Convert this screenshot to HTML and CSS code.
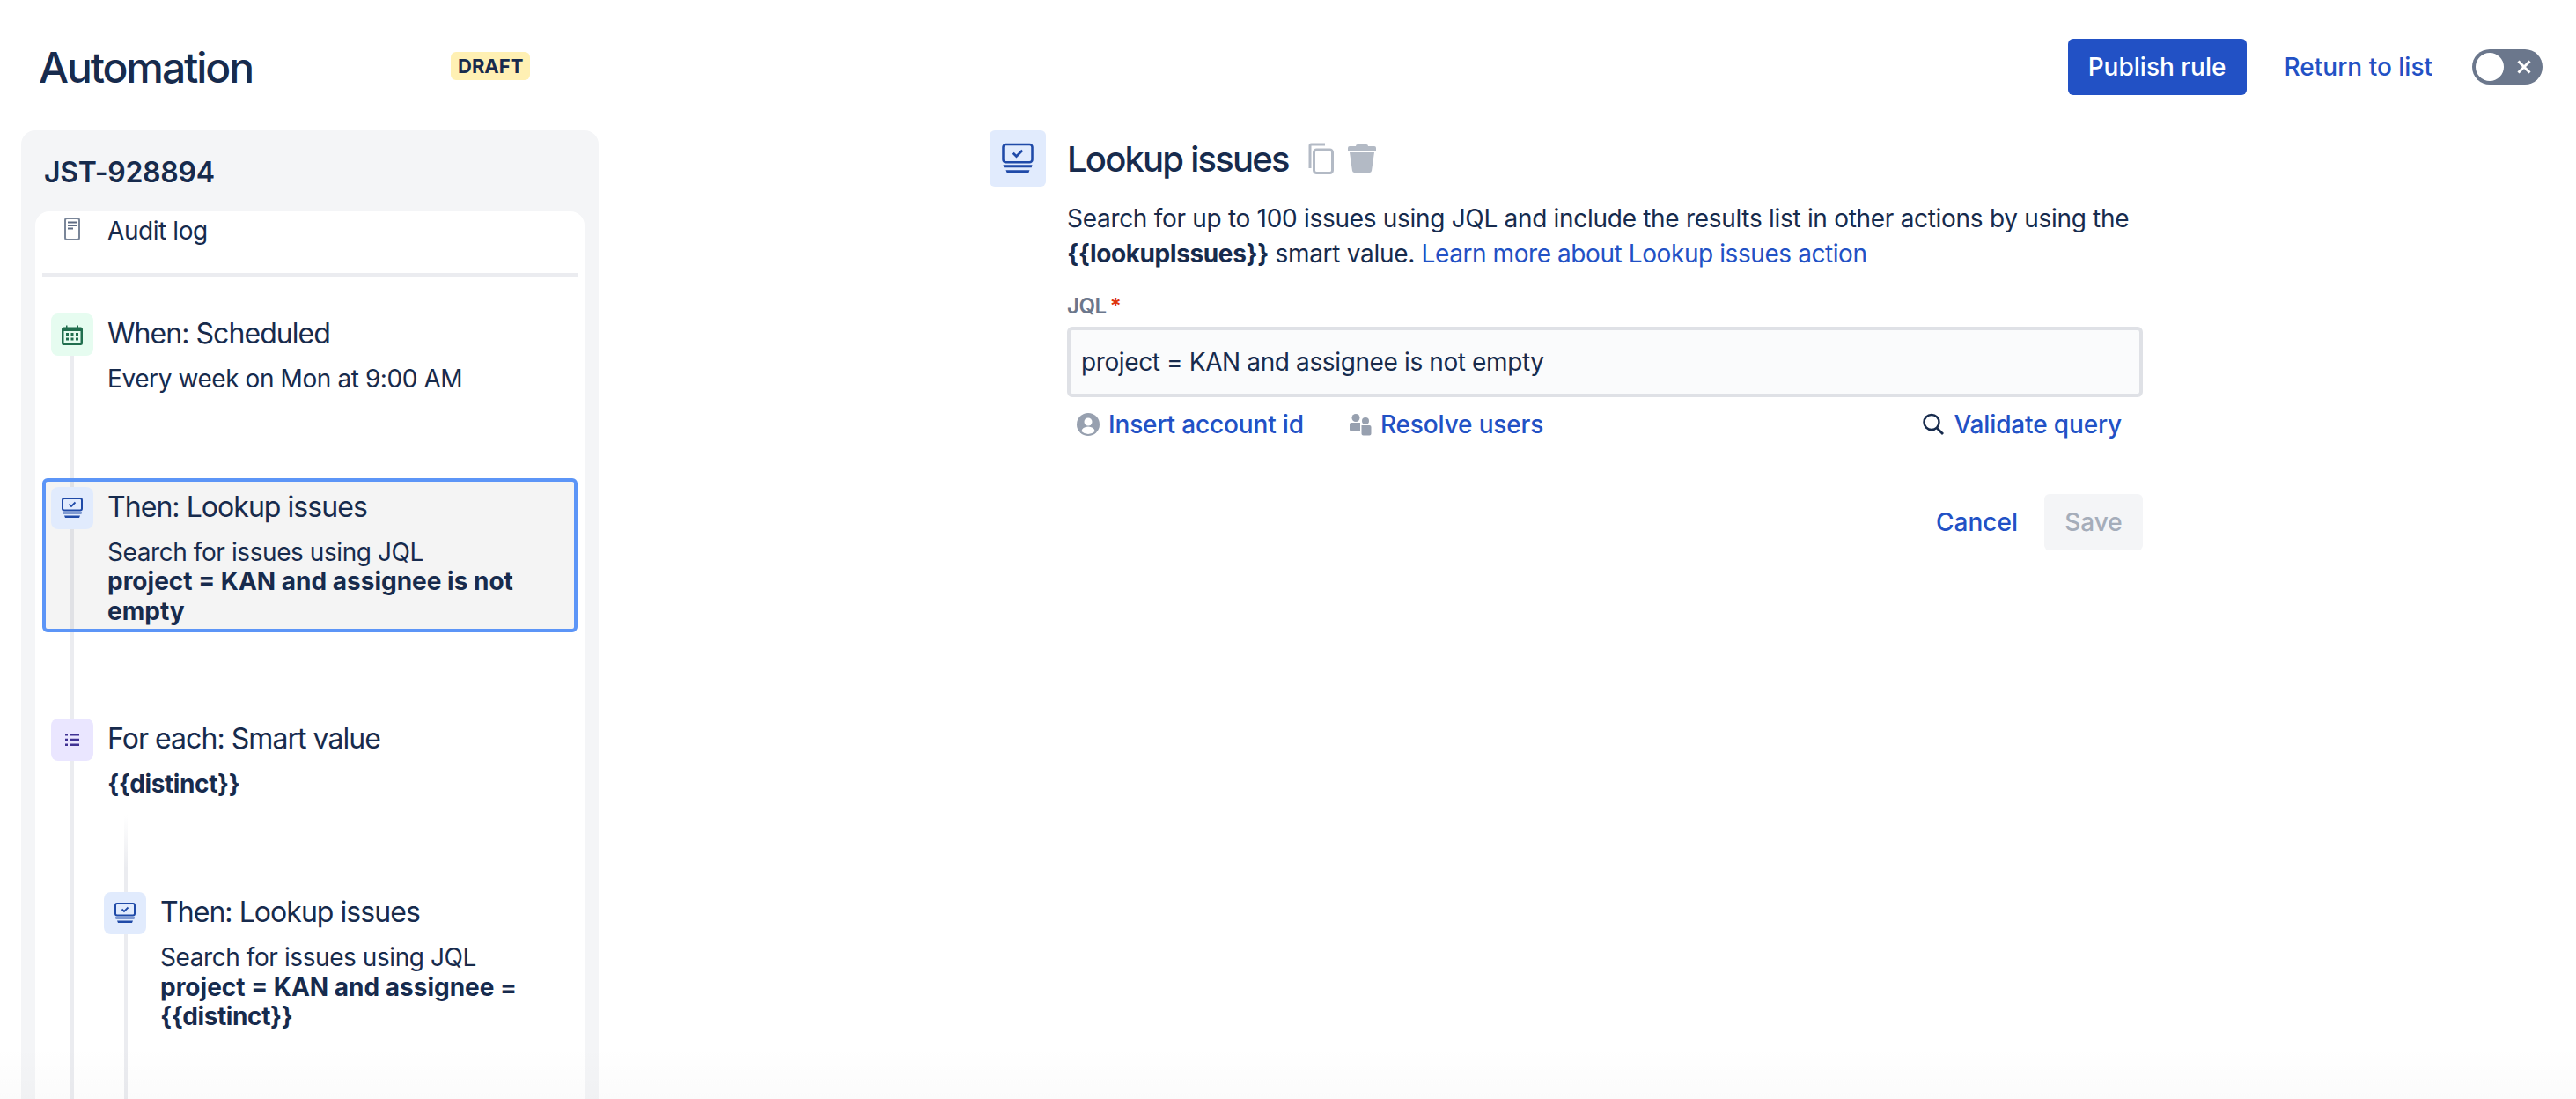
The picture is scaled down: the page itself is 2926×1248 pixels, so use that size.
FILE: index.html
```html
<!DOCTYPE html>
<html lang="en">
<head>
    <meta charset="UTF-8">
    <title>Automation</title>
    <link rel="stylesheet" href="styles.css">
</head>
<body>
    <header class="top-bar">
        <h1 class="page-title">Automation</h1>
        <span class="draft-badge">DRAFT</span>
        <div class="top-actions">
            <button type="button" class="publish-btn">Publish rule</button>
            <a class="return-link" href="#">Return to list</a>
            <div class="toggle">
                <span class="toggle-knob"></span>
                <svg class="toggle-x" viewBox="0 0 16 16"><path d="M1.500 1.500l13 13M14.500 1.500l-13 13"/></svg>
            </div>
        </div>
    </header>

    <div class="layout">
        <!-- rule sidebar -->
        <aside class="sidebar">
            <div class="rule-name">JST-928894</div>
            <div class="rule-list">
                <div class="rail"></div>
                <div class="audit-row">
                    <svg class="audit-icon" viewBox="0 0 18 26">
                        <rect x="1" y="1" width="16" height="24" rx="2" fill="#fff" stroke="#7a8699" stroke-width="2"/>
                        <path d="M4 5.500h10M4 9h10M4 12.500h6" stroke="#5e6c84" stroke-width="2"/>
                    </svg>
                    <span>Audit log</span>
                </div>
                <div class="divider"></div>

                <div class="step step-when">
                    <div class="tile tile-green">
                        <svg class="icon" viewBox="0 0 24 24">
                            <path fill="#216e4e" fill-rule="evenodd" d="M5 1.500h1.500v2h11v-2H19v2h2.500a2.500 2.500 0 0 1 2.500 2.500v15.500a2.500 2.500 0 0 1-2.500 2.500h-19A2.500 2.500 0 0 1 0 21.500V6a2.500 2.500 0 0 1 2.500-2.500H5zM2.500 8v13.500h19V8z"/>
                            <path fill="#216e4e" d="M5 10h3v3H5zM10.500 10h3v3h-3zM16 10h3v3h-3zM5 15.500h3v3H5zM10.500 15.500h3v3h-3zM16 15.500h3v3h-3z"/>
                        </svg>
                    </div>
                    <div class="step-body">
                        <div class="step-title">When: Scheduled</div>
                        <div class="step-text">Every week on Mon at 9:00 AM</div>
                    </div>
                </div>

                <div class="step step-selected">
                    <div class="tile tile-blue">
                        <svg class="icon" viewBox="0 0 24 24">
                            <rect x="1" y="1" width="22" height="13.500" rx="2" fill="none" stroke="#1f4aa8" stroke-width="2"/>
                            <path d="M8.500 7.500l2.500 2.500 4.500-4.500" fill="none" stroke="#1f4aa8" stroke-width="1.800"/>
                            <path d="M1 16.500h22l-.5 2h-21zM3 20.500h18l-1 2.500H4z" fill="#1f4aa8"/>
                        </svg>
                    </div>
                    <div class="step-body">
                        <div class="step-title">Then: Lookup issues</div>
                        <div class="step-text">Search for issues using JQL<br><b>project = KAN and assignee is not empty</b></div>
                    </div>
                </div>

                <div class="step step-foreach">
                    <div class="tile tile-purple">
                        <svg class="icon" viewBox="0 0 24 24">
                            <path fill="#403294" d="M4 5h3v2.500H4zM4 10.750h3v2.500H4zM4 16.500h3V19H4zM9 5h11v2.500H9zM9 10.750h11v2.500H9zM9 16.500h11V19H9z"/>
                        </svg>
                    </div>
                    <div class="step-body">
                        <div class="step-title">For each: Smart value</div>
                        <div class="step-text"><b class="smart">{{distinct}}</b></div>
                    </div>
                </div>

                <div class="nested">
                    <div class="step">
                        <div class="tile tile-blue">
                            <svg class="icon" viewBox="0 0 24 24">
                                <rect x="1" y="1" width="22" height="13.500" rx="2" fill="none" stroke="#1f4aa8" stroke-width="2"/>
                                <path d="M8.500 7.500l2.500 2.500 4.500-4.500" fill="none" stroke="#1f4aa8" stroke-width="1.800"/>
                                <path d="M1 16.500h22l-.5 2h-21zM3 20.500h18l-1 2.500H4z" fill="#1f4aa8"/>
                            </svg>
                        </div>
                        <div class="step-body">
                            <div class="step-title">Then: Lookup issues</div>
                            <div class="step-text">Search for issues using JQL<br><b>project = KAN and assignee = <span class="smart">{{distinct}}</span></b></div>
                        </div>
                    </div>
                </div>
            </div>
        </aside>

        <!-- action config -->
        <main class="config">
            <div class="config-head">
                <div class="tile tile-blue tile-large">
                    <svg class="icon-large" viewBox="0 0 24 24">
                        <rect x="1" y="1" width="22" height="13.500" rx="2" fill="none" stroke="#1f4aa8" stroke-width="1.700"/>
                        <path d="M8.500 7.500l2.500 2.500 4.500-4.500" fill="none" stroke="#1f4aa8" stroke-width="1.800"/>
                        <path d="M1 16.500h22l-.5 2h-21zM3 20.500h18l-1 2.500H4z" fill="#1f4aa8"/>
                    </svg>
                </div>
                <h2 class="config-title">Lookup issues</h2>
                <svg class="copy-icon" viewBox="0 0 30 36">
                    <path d="M3 29V3.500A1.500 1.500 0 0 1 4.500 2H20" fill="none" stroke="#b3bac5" stroke-width="3"/>
                    <rect x="7.500" y="8" width="21" height="26.500" rx="3" fill="none" stroke="#b3bac5" stroke-width="3"/>
                </svg>
                <svg class="trash-icon" viewBox="0 0 32 32">
                    <path fill="#b3bac5" d="M11 0h10a2 2 0 0 1 2 2h7a2 2 0 0 1 2 2v3H0V4a2 2 0 0 1 2-2h7a2 2 0 0 1 2-2zM2 9h28l-3 21a2.500 2.500 0 0 1-2.500 2h-17A2.500 2.500 0 0 1 5 30z"/>
                </svg>
            </div>

            <p class="config-desc">Search for up to 100 issues using JQL and include the results list in other actions by using the <b class="smart">{{lookupIssues}}</b> smart value. <a href="#">Learn more about Lookup issues action</a></p>

            <label class="field-label" for="jql">JQL<span class="required">*</span></label>
            <input class="jql-input" id="jql" type="text" value="project = KAN and assignee is not empty">

            <div class="query-links">
                <a href="#">
                    <svg class="link-icon" viewBox="0 0 26 26">
                        <circle cx="13" cy="13" r="13" fill="#97a0af"/>
                        <circle cx="13" cy="10" r="4.500" fill="#fff"/>
                        <path d="M5.500 21a7.500 5.500 0 0 1 15 0 11 11 0 0 1-15 0z" fill="#fff"/>
                    </svg>
                    Insert account id
                </a>
                <a href="#">
                    <svg class="link-icon" viewBox="0 0 26 26">
                        <circle cx="8" cy="5.500" r="4.500" fill="#97a0af"/>
                        <circle cx="19" cy="9" r="4" fill="#97a0af"/>
                        <path d="M1 13a2 2 0 0 1 2-2h10v10H3a2 2 0 0 1-2-2zM14.500 14h9a2 2 0 0 1 2 2v7.500a2 2 0 0 1-2 2h-7a2 2 0 0 1-2-2z" fill="#97a0af"/>
                    </svg>
                    Resolve users
                </a>
                <a class="validate-link" href="#">
                    <svg class="link-icon" viewBox="0 0 26 26">
                        <circle cx="11" cy="10.500" r="8.500" fill="none" stroke="#172b4d" stroke-width="2.500"/>
                        <path d="M17 17l7 7" stroke="#172b4d" stroke-width="2.800"/>
                    </svg>
                    Validate query
                </a>
            </div>

            <div class="form-actions">
                <a class="cancel-link" href="#">Cancel</a>
                <button type="button" class="save-btn" disabled>Save</button>
            </div>
        </main>
    </div>

    <div class="bottom-fade"></div>
</body>
</html>
```

FILE: styles.css
```css
* {
    box-sizing: border-box;
}
html, body {
    height: 100%;
}
body {
    margin: 0;
    overflow: hidden;
    display: flex;
    flex-direction: column;
    background: #fff;
    color: #172b4d;
    font-family: Inter, "Liberation Sans", sans-serif;
    font-size: 28px;
    letter-spacing: -0.42px;
}
a {
    color: #2251c5;
    text-decoration: none;
}
b {
    font-weight: 700;
    letter-spacing: 0;
}
.smart {
    letter-spacing: -0.4px;
}

/* top bar */
.top-bar {
    display: flex;
    align-items: center;
    flex: none;
    height: 148px;
    padding: 4px 38px 0 44px;
}
.page-title {
    margin: 0;
    width: 468px;
    font-size: 48px;
    font-weight: 500;
    letter-spacing: -2.1px;
}
.draft-badge {
    padding: 0 8px;
    height: 32px;
    margin-top: -2px;
    line-height: 32px;
    border-radius: 6px;
    background: #fff0b3;
    font-size: 22px;
    font-weight: 700;
    letter-spacing: 0;
}
.top-actions {
    display: flex;
    align-items: center;
    margin-left: auto;
}
.publish-btn {
    width: 203px;
    height: 64px;
    border: none;
    border-radius: 6px;
    background: #2251c5;
    color: #fff;
    font: 500 28px Inter, sans-serif;
}
.return-link {
    margin-left: 43px;
    font-weight: 500;
    letter-spacing: 0;
}
.toggle {
    display: flex;
    align-items: center;
    justify-content: space-between;
    width: 80px;
    height: 40px;
    margin-left: 45px;
    padding: 0 13px 0 4px;
    border-radius: 20px;
    background: #6b778c;
}
.toggle-knob {
    width: 32px;
    height: 32px;
    border-radius: 50%;
    background: #fff;
}
.toggle-x {
    width: 16px;
    height: 16px;
    fill: none;
    stroke: #fff;
    stroke-width: 3;
}

/* layout */
.layout {
    display: flex;
    flex: 1;
    min-height: 0;
}
.sidebar {
    display: flex;
    flex-direction: column;
    flex: none;
    width: 656px;
    margin-left: 24px;
    padding: 0 16px;
    border-radius: 16px 16px 0 0;
    background: #f4f5f7;
}
.rule-name {
    flex: none;
    height: 92px;
    padding: 26px 10px 0;
    font-size: 32px;
    font-weight: 600;
    line-height: 44px;
    letter-spacing: -0.3px;
}
.rule-list {
    position: relative;
    flex: 1;
    padding: 0 8px;
    overflow: hidden;
    border-radius: 16px 16px 0 0;
    background: #fff;
}
.rail {
    position: absolute;
    left: 40px;
    top: 164px;
    bottom: 0;
    width: 4px;
    background: #ebecf0;
}
.audit-row {
    display: flex;
    align-items: flex-start;
    gap: 31px;
    height: 70px;
    padding: 7px 0 0 25px;
    line-height: 30px;
}
.audit-icon {
    width: 18px;
    height: 26px;
}
.divider {
    height: 4px;
    background: #ebecf0;
}

/* steps */
.step {
    position: relative;
    display: flex;
    gap: 16px;
    padding: 0 10px;
}
.step-when {
    margin-top: 42px;
}
.step-selected {
    margin-top: 95px;
    padding: 6px 6px 3px;
    border: 4px solid #5c95f7;
    border-radius: 6px;
    background: rgba(0, 0, 0, 0.045);
}
.step-foreach {
    margin-top: 98px;
}
.tile {
    display: flex;
    align-items: center;
    justify-content: center;
    flex: none;
    width: 48px;
    height: 48px;
    border-radius: 8px;
}
.tile-green {
    background: #e6fcf0;
}
.tile-blue {
    background: #e1ebfd;
}
.tile-purple {
    background: #eae6ff;
}
.icon {
    width: 24px;
    height: 24px;
}
.step-title {
    font-size: 32px;
    line-height: 46px;
    letter-spacing: -0.95px;
}
.step-text {
    margin-top: 12px;
    line-height: 33.6px;
}
.nested {
    position: relative;
    margin-top: 105px;
    margin-left: 60px;
}
.nested::before {
    content: "";
    position: absolute;
    left: 33px;
    top: -87px;
    bottom: -200px;
    width: 4px;
    background: linear-gradient(to bottom, #fff, #ebecf0 60px);
}

/* config panel */
.config {
    width: 1310px;
    margin-left: 444px;
}
.config-head {
    display: flex;
    align-items: center;
}
.tile-large {
    width: 64px;
    height: 64px;
    border-radius: 6px;
}
.icon-large {
    width: 36px;
    height: 37px;
}
.config-title {
    margin: 0 0 0 24px;
    font-size: 40px;
    font-weight: 500;
    letter-spacing: -1.800px;
}
.copy-icon {
    width: 30px;
    height: 36px;
    margin-left: 21px;
}
.trash-icon {
    width: 32px;
    height: 32px;
    margin-left: 16px;
}
.config-desc {
    margin: 16px 0 0 88px;
    line-height: 40px;
    letter-spacing: -0.3px;
}
.config-desc a {
    letter-spacing: -0.42px;
}
.field-label {
    display: block;
    margin: 26px 0 0 88px;
    color: #6b778c;
    font-size: 24px;
    font-weight: 600;
    line-height: 28px;
}
.required {
    margin-left: 4px;
    color: #de350b;
}
.jql-input {
    display: block;
    width: 1222px;
    height: 80px;
    margin: 9px 0 0 88px;
    padding: 0 12px;
    border: 4px solid #dfe1e6;
    border-radius: 6px;
    outline: none;
    background: #fafbfc;
    color: #172b4d;
    font: 28px Inter, sans-serif;
    letter-spacing: -0.38px;
}
.query-links {
    display: flex;
    align-items: center;
    gap: 51px;
    margin: 14px 0 0 99px;
    padding-right: 24px;
    font-weight: 500;
    letter-spacing: -0.15px;
}
.query-links a {
    display: flex;
    align-items: center;
    gap: 10px;
    line-height: 34px;
}
.link-icon {
    width: 26px;
    height: 26px;
}
.validate-link {
    margin-left: auto;
}
.form-actions {
    display: flex;
    align-items: center;
    justify-content: flex-end;
    gap: 30px;
    margin-top: 62px;
}
.cancel-link {
    font-weight: 500;
    letter-spacing: 0;
}
.save-btn {
    width: 112px;
    height: 64px;
    border: none;
    border-radius: 6px;
    background: #f4f5f7;
    color: #a5adba;
    font: 500 28px Inter, sans-serif;
}

/* faint shade along the bottom edge */
.bottom-fade {
    position: absolute;
    left: 0;
    right: 0;
    bottom: 0;
    height: 60px;
    background: linear-gradient(to bottom, rgba(0, 0, 0, 0), rgba(0, 0, 0, 0.015));
    pointer-events: none;
}
```
